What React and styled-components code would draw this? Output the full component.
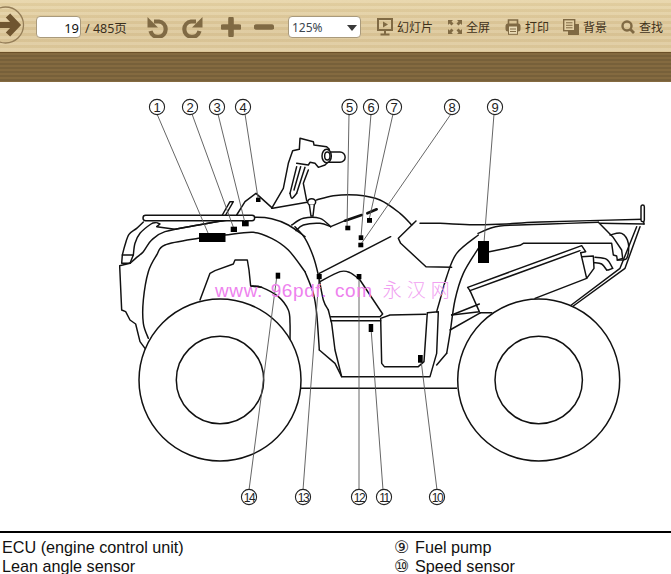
import React from 'react';
import styled, { createGlobalStyle } from 'styled-components';

const Global = createGlobalStyle`
  html, body { margin: 0; padding: 0; background: #fff; overflow: hidden; }
  #root { width: 671px; height: 574px; overflow: hidden; }
`;
const Page = styled.div`
  width: 671px; height: 574px; overflow: hidden;
  display: flex; flex-direction: column;
`;
const Toolbar = styled.div`
  height: 52px; flex: none; box-sizing: border-box; padding-top: 2px;
  display: flex; align-items: center;
  font-family: "Noto Sans", "Noto Sans CJK SC", sans-serif;
  background:
    repeating-linear-gradient(180deg, rgba(255,255,255,.10) 0 3px, rgba(120,90,40,.05) 3px 6px),
    linear-gradient(180deg, #e7d4a6 0%, #dcc698 60%, #e0cc9f 100%);
`;
const Band = styled.div`
  height: 30px; flex: none;
  background:
    repeating-linear-gradient(180deg, #846a40 0 2px, #77603a 2px 4px);
  border-top: 1px solid #6a4f28; box-sizing: border-box;
`;
const NavIcon = styled.svg`
  flex: none; width: 25px; height: 44px; margin-right: 11px; margin-top: -5px;
`;
const PageInput = styled.div`
  width: 45px; height: 22px; box-sizing: border-box; flex: none;
  background: #fff; border: 1px solid #a99a7c; border-radius: 4px;
  text-align: right; padding-right: 1px; font-size: 13px; line-height: 22px; color: #111;
`;
const PageCount = styled.span`
  margin-left: 4px; font-size: 12.5px; color: #3a2f1d; white-space: nowrap; width: 45px;
`;
const ToolIcon = styled.svg`
  flex: none; margin-left: ${p => p.$left}px;
`;
const ZoomSelect = styled.div`
  width: 73px; height: 22px; box-sizing: border-box; flex: none; margin-left: 14px;
  background: #fff; border: 1px solid #a99a7c; border-radius: 4px; position: relative;
  padding-left: 3px; font-size: 12px; line-height: 22px; color: #3c4650;
  &::after {
    content: ""; position: absolute; right: 3px; top: 8px;
    border-left: 5px solid transparent; border-right: 5px solid transparent;
    border-top: 6px solid #3a3a3a;
  }
`;
const ToolGroup = styled.div`
  display: flex; align-items: center; gap: 4px; flex: none; margin-left: ${p => p.$left}px;
  font-size: 12px; color: #3f3119; white-space: nowrap;
`;
const Diagram = styled.div`
  height: 449px; flex: none; position: relative;
`;
const Drawing = styled.svg`
  display: block; width: 671px; height: 449px;
`;
const Watermark = styled.div`
  position: absolute; left: 215px; top: 195px; white-space: nowrap;
  font: 19px/24px "Liberation Sans", "Noto Sans CJK SC", sans-serif;
  letter-spacing: 0.6px; word-spacing: 2px; color: #ee82ee;
`;
const WatermarkCjk = styled.span`
  font-family: "Noto Sans CJK SC", sans-serif; font-weight: 300;
  letter-spacing: 5px; margin-left: 10px; color: #f1a0f1; font-size: 19px;
`;
const Rule = styled.div`
  height: 2px; flex: none; background: #000;
`;
const Legend = styled.div`
  display: grid; grid-template-columns: 394px 1fr; padding-top: 5px;
  font: 16.2px/19px "Liberation Sans", sans-serif; color: #111;
`;
const Col = styled.div`
  padding-left: ${p => p.$pad}px;
`;
const Item = styled.div`
  display: flex; align-items: center; white-space: nowrap;
`;
const Mark = styled.span`
  font-family: "DejaVu Sans", sans-serif; font-size: 17px; line-height: 19px; width: 21px; flex: none; color: #222;
`;

function smooth(pts) {
  let d = `M${pts[0][0]} ${pts[0][1]}`;
  for (let i = 0; i < pts.length - 1; i++) {
    const p0 = pts[i - 1] || pts[i], p1 = pts[i], p2 = pts[i + 1], p3 = pts[i + 2] || p2;
    const c1 = [p1[0] + (p2[0] - p0[0]) / 6, p1[1] + (p2[1] - p0[1]) / 6];
    const c2 = [p2[0] - (p3[0] - p1[0]) / 6, p2[1] - (p3[1] - p1[1]) / 6];
    d += ` C${c1[0]} ${c1[1]} ${c2[0]} ${c2[1]} ${p2[0]} ${p2[1]}`;
  }
  return d;
}
const line = pts => 'M' + pts.map(p => p.join(' ')).join(' L');

const F8 = {
  smooth: [
    [[85,66],[65,85],[42,103],[30,135],[22,165]],
    [[122,68],[108,72],[75,100],[60,130],[55,165]],
    [[45,190],[65,172],[85,155],[110,120],[150,95],[250,75],[340,60],[415,52],[470,56],[520,75],[570,110]],
    [[100,415],[85,370],[85,300],[100,215],[125,165],[150,135],[250,115],[330,105],[415,97],[470,115],[520,150],[570,215]],
    [[410,258],[440,262],[490,290],[520,330],[525,370],[525,420]],
  ],
  line: [
    [[22,165],[55,165],[45,190],[20,190],[22,165]],
    [[45,190],[14,197],[20,330],[32,335],[45,360],[62,372],[75,425],[90,445]],
    [[125,68],[135,72],[125,80],[180,88],[350,57]],
    [[255,300],[285,220],[300,212],[355,192],[360,180],[397,180],[402,210],[407,258],[440,262]],
    [[322,45],[345,5],[355,5],[332,45]],
  ],
  rounded: [[84, 46, 335, 16]],
};
const F9 = {
  smooth: [
    [[15,110],[45,145],[70,200],[85,255],[100,330],[115,360]],
    [[45,245],[70,310],[80,370],[88,480]],
    [[80,30],[130,17],[200,15],[270,30],[330,70],[365,105]],
    [[5,105],[40,85],[90,85],[122,110]],
    [[18,122],[40,105],[90,100],[122,110]],
    [[90,275],[150,245],[180,248],[210,270]],
    [[565,135],[500,190],[470,260],[450,330],[440,365]],
    [[565,175],[520,250],[495,330],[480,430],[470,490]],
  ],
  line: [
    [[115,360],[125,400],[135,480],[155,560],[420,560],[440,490],[445,365],[412,368],[402,515],[385,530],[283,530],[275,520],[272,385],[300,375],[407,373]],
    [[122,380],[270,380],[278,372],[210,270]],
    [[122,392],[272,392]],
    [[88,480],[135,520],[155,560]],
    [[122,110],[165,92]],
    [[88,250],[302,140]],
    [[470,490],[440,525]],
    [[365,105],[378,93],[325,145],[332,160],[408,230],[485,232]],
  ],
  thick: [[[165,92],[215,75]],[[232,70],[260,58]]],
};
const F10 = {
  smooth: [
    [[-60,70],[0,70],[100,74],[200,72],[300,66],[610,58]],
    [[114,100],[180,78],[330,72],[475,67]],
    [[510,105],[545,100],[565,130],[560,175],[532,180]],
    [[465,172],[500,178],[518,205]],
    [[462,188],[485,192],[500,210]],
  ],
  line: [
    [[475,67],[518,110],[545,150],[548,175],[532,180],[530,168],[520,165],[515,130],[250,130],[240,136],[148,155]],
    [[90,272],[83,262],[425,137],[437,155],[422,158]],
    [[90,272],[420,152]],
    [[90,272],[118,335],[35,345]],
    [[118,312],[35,345]],
    [[120,338],[155,338]],
    [[122,338],[30,390]],
    [[422,158],[440,235],[285,295]],
    [[425,170],[460,168],[462,205],[440,235]],
    [[518,205],[505,210],[500,210]],
    [[612,72],[480,70]],
    [[610,58],[612,72]],
    [[400,318],[555,205],[600,80]],
    [[390,318],[540,205],[590,80]],
  ],
  rounded: [[603, 15, 10, 50]],
};
const F3 = {
  line: [[[380,375],[405,335],[438,310],[488,355],[600,335]]],
};
const F11 = {
  smooth: [
    [[60,190],[66,205],[80,190]],
  ],
  line: [
    [[5,235],[40,175],[55,100],[68,62],[88,58],[90,25],[130,35],[132,45],[170,50],[178,58]],
    [[80,100],[115,105],[120,97],[135,100],[145,112],[165,105],[172,98]],
    [[80,110],[60,190]],
    [[105,112],[80,190]],
    [[92,110],[72,180]],
    [[115,120],[100,160],[110,212]],
  ],
};

const Frame = ({ x, y, data }) => (
  <g transform={`translate(${x} ${y}) scale(${1 / 3})`} fill="none" stroke="#111" strokeWidth="4.4" strokeLinejoin="round" strokeLinecap="round">
    {(data.smooth || []).map((p, i) => <path key={'s' + i} d={smooth(p)} />)}
    {(data.line || []).map((p, i) => <path key={'l' + i} d={line(p)} />)}
    {(data.thick || []).map((p, i) => <path key={'t' + i} d={line(p)} strokeWidth="8" />)}
    {(data.rounded || []).map((r, i) => <rect key={'r' + i} x={r[0]} y={r[1]} width={r[2]} height={r[3]} rx={Math.min(r[2], r[3]) / 2} fill="#fff" />)}
  </g>
);

const leaders = [
  [157,114,208,233],[192,114,234,229],[218,114,245,223],[245,114,258,198],
  [349,114,347,228],[371,114,361,237],[393,114,369,220],[451,114,361,244],[494,114,484,243],
  [437,490,421,360],[383,490,371,328],[359,490,359,277],[303,490,319,277],[249,490,277,275],
];
const markers = [
  [199,233,26.5,9],[230.7,226.7,6.3,5.3],[242,221,6.7,5.3],[256,197.7,4.5,4.3],[345.3,225.7,5,4.6],
  [358.7,235.3,4.6,4.8],[367,218,5,4.8],[358.3,242.7,5,4.6],[478,241,11,22],[316.7,274,5,5.2],
  [356.7,274,4.7,5.2],[275.7,272.7,4.5,6],[368.7,324,4.5,8],[418,355,4.7,7.7],
];
const callouts = [
  [157,107,'1'],[190,107,'2'],[217,107,'3'],[243,107,'4'],[349.5,107,'5'],[371,107,'6'],[394,107,'7'],
  [452,107,'8'],[495,107,'9'],[437,497,'10'],[384,497,'11'],[359,497,'12'],[303,497,'13'],[249,497,'14'],
];

const B = '#806a44';

export default function App() {
  return (
    <Page>
      <Global />
      <Toolbar>
        <NavIcon viewBox="0 0 25 44">
          <circle cx="5.5" cy="22" r="18" fill="none" stroke="#957e58" strokeWidth="1.3" />
          <path d="M-2 22H15M8 12.5L17 22L8 31.5" fill="none" stroke="#6f5530" strokeWidth="6" />
        </NavIcon>
        <PageInput>19</PageInput>
        <PageCount>/ 485页</PageCount>
        <ToolIcon $left={17} width="22" height="22" viewBox="0 0 22 22">
          <path d="M7 5.5H12A7.7 7.7 0 1 1 3.5 15" fill="none" stroke={B} strokeWidth="4.2" />
          <path d="M0.5 1V11.5H11Z" fill={B} />
        </ToolIcon>
        <ToolIcon $left={12} width="22" height="22" viewBox="0 0 22 22">
          <path d="M15 5.5H10A7.7 7.7 0 1 0 18.5 15" fill="none" stroke={B} strokeWidth="4.2" />
          <path d="M21.5 1V11.5H11Z" fill={B} />
        </ToolIcon>
        <ToolIcon $left={18} width="20" height="20" viewBox="0 0 20 20">
          <path d="M10 2V18M2 10H18" stroke={B} strokeWidth="5.6" strokeLinecap="round" />
        </ToolIcon>
        <ToolIcon $left={13} width="20" height="20" viewBox="0 0 20 20">
          <path d="M2.5 10H17.5" stroke={B} strokeWidth="5.6" strokeLinecap="round" />
        </ToolIcon>
        <ZoomSelect>125%</ZoomSelect>
        <ToolGroup $left={16}>
          <svg width="16" height="18" viewBox="0 0 16 18">
            <path d="M1 1H15V12H1ZM8 12V16M3.5 16.5H12.5" fill="none" stroke={B} strokeWidth="2" />
            <path d="M6 3.5V9.5L11 6.5Z" fill={B} />
          </svg>
          <span>幻灯片</span>
        </ToolGroup>
        <ToolGroup $left={15}>
          <svg width="14" height="14" viewBox="0 0 14 14" fill={B}>
            <path d="M0 0H5L3.5 1.5 5.5 3.5 3.5 5.5 1.5 3.5 0 5ZM14 0V5L12.5 3.5 10.5 5.5 8.5 3.5 10.5 1.5 9 0ZM0 14V9L1.5 10.5 3.5 8.5 5.5 10.5 3.5 12.5 5 14ZM14 14H9L10.5 12.5 8.5 10.5 10.5 8.5 12.5 10.5 14 9Z" />
          </svg>
          <span>全屏</span>
        </ToolGroup>
        <ToolGroup $left={15}>
          <svg width="16" height="16" viewBox="0 0 16 16">
            <path d="M3.5 5V1H12.5V5" fill="none" stroke={B} strokeWidth="1.6" />
            <rect x="0.5" y="4.5" width="15" height="8" rx="2.5" fill={B} />
            <rect x="3.5" y="7" width="9" height="8.3" fill="#eadbb6" stroke={B} />
            <path d="M5 10H11M5 12.5H11" stroke={B} />
          </svg>
          <span>打印</span>
        </ToolGroup>
        <ToolGroup $left={14}>
          <svg width="16" height="16" viewBox="0 0 16 16">
            <path d="M5 5H16V16H5Z" fill={B} />
            <rect x="0.7" y="0.7" width="11" height="11" fill="#e3d0a5" stroke={B} strokeWidth="1.4" />
            <path d="M3 3.8H9.5M3 6.3H9.5M3 8.8H9.5" stroke={B} />
          </svg>
          <span>背景</span>
        </ToolGroup>
        <ToolGroup $left={14}>
          <svg width="14" height="14" viewBox="0 0 14 14">
            <circle cx="6" cy="6" r="4.5" fill="none" stroke={B} strokeWidth="2.4" />
            <path d="M9.5 9.5L13 13" stroke={B} strokeWidth="2.8" />
          </svg>
          <span>查找</span>
        </ToolGroup>
      </Toolbar>
      <Band />
      <Diagram>
        <Drawing viewBox="0 82 671 449">
          <Frame x={115} y={200} data={F8} />
          <Frame x={290} y={190} data={F9} />
          <Frame x={440} y={200} data={F10} />
          <Frame x={110} y={90} data={F3} />
          <Frame x={270} y={130} data={F11} />
          <g transform="translate(270 130) scale(0.3333)" fill="#fff" stroke="#111" strokeWidth="4.4">
            <path d="M172 66H210A14.5 14.5 0 0 1 210 97H172Z" />
            <ellipse cx="170" cy="78" rx="14" ry="20" />
            <ellipse cx="172" cy="78" rx="8" ry="12" />
            <ellipse cx="125" cy="216" rx="12" ry="10" />
            <path d="M118 224L123 258H129L133 224" />
          </g>
          <path d="M301 388.3H457" stroke="#111" strokeWidth="1.4" />
          <g fill="#fff" stroke="#111" strokeWidth="1.5">
            <circle cx="220" cy="380" r="81" />
            <circle cx="220" cy="380" r="43.7" />
            <circle cx="538.7" cy="380" r="81" />
            <circle cx="538.7" cy="380" r="43.7" />
          </g>
          <g stroke="#555" strokeWidth="0.9">
            {leaders.map((l, i) => <line key={i} x1={l[0]} y1={l[1]} x2={l[2]} y2={l[3]} />)}
          </g>
          <g fill="#000">
            {markers.map((m, i) => <rect key={i} x={m[0]} y={m[1]} width={m[2]} height={m[3]} />)}
          </g>
          {callouts.map(c => (
            <g key={c[2]}>
              <circle cx={c[0]} cy={c[1]} r="7.6" fill="#fff" stroke="#222" strokeWidth="1.1" />
              <text x={c[0]} y={c[1] + 4.6} textAnchor="middle" fontFamily="Liberation Sans, sans-serif"
                fontSize={c[2].length > 1 ? 12 : 13} letterSpacing={c[2].length > 1 ? -1.4 : 0} fill="#222">{c[2]}</text>
            </g>
          ))}
        </Drawing>
        <Watermark>www. 96pdf. com<WatermarkCjk>永汉网</WatermarkCjk></Watermark>
      </Diagram>
      <Rule />
      <Legend>
        <Col $pad={2}>
          <Item>ECU (engine control unit)</Item>
          <Item>Lean angle sensor</Item>
        </Col>
        <Col $pad={0}>
          <Item><Mark>⑨</Mark>Fuel pump</Item>
          <Item><Mark>⑩</Mark>Speed sensor</Item>
        </Col>
      </Legend>
    </Page>
  );
}
